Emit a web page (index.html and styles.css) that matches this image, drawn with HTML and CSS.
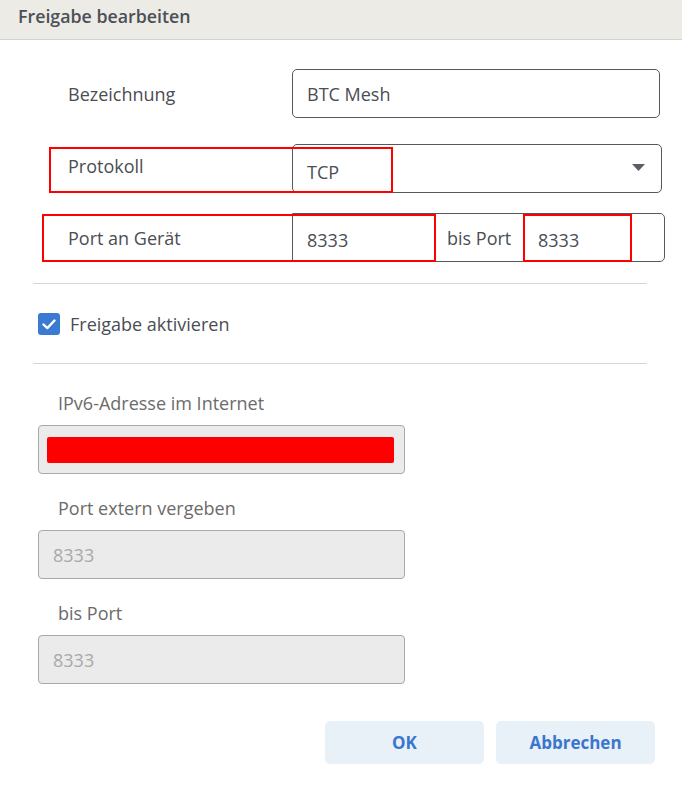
FILE: index.html
```html
<!DOCTYPE html>
<html lang="de">
<head>
    <meta charset="UTF-8">
    <meta name="viewport" content="width=device-width, initial-scale=1.0">
    <title>Freigabe bearbeiten</title>
    <link rel="stylesheet" href="styles.css">
</head>
<body>
    <div class="dialog">
        <div class="dialog-head">Freigabe bearbeiten</div>
        <div class="dialog-body">
            <div class="row row-name">
                <span class="row-label">Bezeichnung</span>
                <div class="field field-name">BTC Mesh</div>
            </div>
            <div class="row row-proto">
                <!-- rote Markierung -->
                <span class="mark mark-proto"></span>
                <span class="row-label">Protokoll</span>
                <div class="field field-select">
                    <span>TCP</span>
                    <svg class="caret" width="13" height="7" viewBox="0 0 13 7"><path d="M0 0h13L6.5 7z" fill="#5a5f66"/></svg>
                </div>
            </div>
            <div class="row row-port">
                <span class="mark mark-port"></span>
                <span class="mark mark-port2"></span>
                <span class="row-label">Port an Gerät</span>
                <div class="port-group">
                    <div class="pg-cell pg-from">8333</div>
                    <div class="pg-addon">bis Port</div>
                    <div class="pg-cell pg-to">8333</div>
                    <div class="pg-rest"></div>
                </div>
            </div>
            <div class="divider"></div>
            <div class="check">
                <span class="check-box">
                    <svg width="14" height="11" viewBox="0 0 14 11"><path d="M1.5 5.5l3.8 3.6L12.5 1.5" fill="none" stroke="#fff" stroke-width="2.4" stroke-linecap="round" stroke-linejoin="round"/></svg>
                </span>
                <span>Freigabe aktivieren</span>
            </div>
            <div class="divider divider-2"></div>
            <div class="ext">
                <div class="ext-label">IPv6-Adresse im Internet</div>
                <div class="ext-field"><span class="redact"></span></div>
                <div class="ext-label">Port extern vergeben</div>
                <div class="ext-field">8333</div>
                <div class="ext-label">bis Port</div>
                <div class="ext-field">8333</div>
            </div>
            <div class="actions">
                <button type="button">OK</button>
                <button type="button">Abbrechen</button>
            </div>
        </div>
    </div>
</body>
</html>
```

FILE: styles.css
```css
body {
    margin: 0;
    padding: 0;
    font-family: "Open Sans", "Noto Sans", sans-serif;
    background-color: #ffffff;
    color: #4a4e53;
}
.dialog-head {
    height: 39px;
    line-height: 33px;
    padding-left: 18px;
    background-color: #ecebe5;
    border-bottom: 1px solid #d3d3d0;
    font-size: 17.8px;
    font-weight: 600;
    color: #4b5057;
}
.dialog-body {
    padding: 29px 35px 0 33px;
}
.row {
    position: relative;
    display: flex;
    align-items: center;
    height: 49px;
    padding-left: 35px;
    font-size: 18px;
}
.row-label {
    width: 224px;
    flex-shrink: 0;
}
.row-proto {
    margin-top: 26px;
}
.row-proto .row-label {
    margin-top: -6px;
}
.row-port {
    margin-top: 20px;
}
.field {
    box-sizing: border-box;
    flex-shrink: 0;
    height: 49px;
    border: 1px solid #55595e;
    border-radius: 5px;
    display: flex;
    align-items: center;
}
.field-name {
    width: 368px;
    padding-left: 14px;
}
.field-select {
    width: 370px;
    padding: 0 16px 0 14px;
    justify-content: space-between;
}
.field-select span {
    padding-top: 6px;
}
.caret {
    margin-top: -3px;
}
.port-group {
    box-sizing: border-box;
    flex-shrink: 0;
    width: 373px;
    height: 49px;
    display: flex;
    border: 1px solid #55595e;
    border-radius: 0 5px 5px 0;
}
.pg-cell,
.pg-addon {
    display: flex;
    align-items: center;
    border-right: 1px solid #55595e;
}
.pg-cell {
    padding-top: 4px;
    box-sizing: border-box;
}
.pg-from {
    width: 143px;
    padding-left: 14px;
}
.pg-addon {
    width: 88px;
    padding-left: 11px;
    box-sizing: border-box;
}
.pg-to {
    width: 108px;
    padding-left: 14px;
    border-right: none;
}
.pg-rest {
    flex: 1;
}
.mark {
    position: absolute;
    box-sizing: border-box;
    border: 2px solid #ff0000;
}
.mark-proto {
    left: 16px;
    top: 3px;
    width: 344px;
    height: 46px;
}
.mark-port {
    left: 9px;
    top: 1px;
    width: 394px;
    height: 48px;
}
.mark-port2 {
    left: 490px;
    top: 1px;
    width: 109px;
    height: 48px;
}
.divider {
    height: 1px;
    background-color: #d6d6d6;
    margin-top: 21px;
}
.divider-2 {
    margin-top: 28px;
}
.check {
    display: flex;
    align-items: center;
    height: 22px;
    margin-top: 29px;
    padding-left: 5px;
    font-size: 18px;
}
.check-box {
    width: 22px;
    height: 22px;
    border-radius: 3px;
    background-color: #3b7ad3;
    display: flex;
    align-items: center;
    justify-content: center;
    margin-right: 10px;
}
.ext {
    padding: 27px 0 0 5px;
}
.ext-label {
    height: 24px;
    line-height: 24px;
    padding-left: 20px;
    font-size: 18px;
    color: #6b6b6b;
    margin-bottom: 10px;
}
.ext-field {
    box-sizing: border-box;
    width: 367px;
    height: 49px;
    background-color: #ebebeb;
    border: 1px solid #a9a9a9;
    border-radius: 4px;
    margin-bottom: 22px;
    display: flex;
    align-items: center;
    padding-left: 14px;
    font-size: 18px;
    color: #a9a9a9;
}
.ext-field:nth-child(6) {
    margin-bottom: 0;
}
.redact {
    width: 347px;
    height: 26px;
    margin-left: -6px;
    background-color: #ff0000;
    border-radius: 2px;
}
.actions {
    display: flex;
    justify-content: flex-end;
    gap: 12px;
    margin-top: 37px;
    margin-right: -8px;
}
button {
    width: 159px;
    height: 43px;
    border: none;
    border-radius: 5px;
    background-color: #e8f0f8;
    color: #3a76cf;
    font-family: "Open Sans", "Noto Sans", sans-serif;
    font-size: 17px;
    font-weight: 700;
    cursor: pointer;
}
```
